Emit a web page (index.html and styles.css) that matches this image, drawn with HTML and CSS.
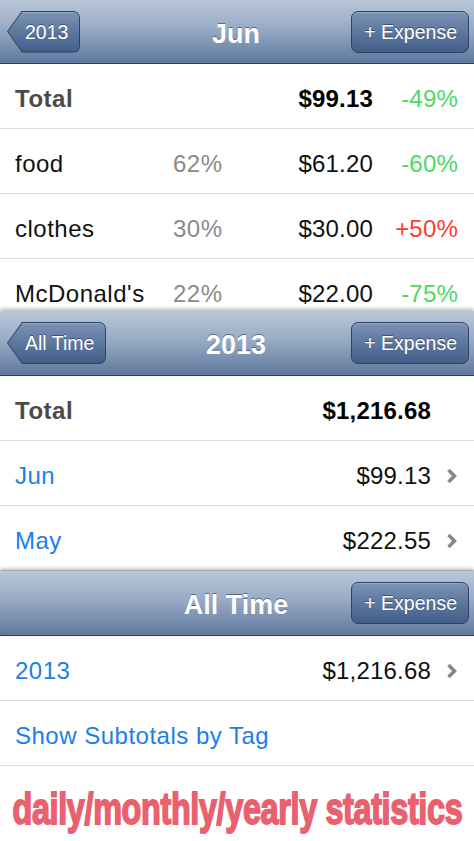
FILE: index.html
```html
<!DOCTYPE html>
<html lang="en">

<head>
    <meta charset="UTF-8">
    <meta name="viewport" content="width=device-width, initial-scale=1.0">
    <title>Expenses</title>
    <link rel="stylesheet" href="styles.css">
</head>

<body>
    <!-- month view, partly covered by the year view -->
    <section class="panel panel-month">
        <div class="nav nav-first">
            <div class="nav-left">
                <a class="back"><span class="back-in">2013</span></a>
            </div>
            <h1>Jun</h1>
            <div class="nav-right">
                <a class="btn">+ Expense</a>
            </div>
        </div>
        <div class="list list-clip">
            <div class="row row-tag total">
                <span class="label">Total</span>
                <span class="pct"></span>
                <span class="amount">$99.13</span>
                <span class="change down">-49%</span>
            </div>
            <div class="row row-tag">
                <span class="label">food</span>
                <span class="pct">62%</span>
                <span class="amount">$61.20</span>
                <span class="change down">-60%</span>
            </div>
            <div class="row row-tag">
                <span class="label">clothes</span>
                <span class="pct">30%</span>
                <span class="amount">$30.00</span>
                <span class="change up">+50%</span>
            </div>
            <div class="row row-tag">
                <span class="label">McDonald's</span>
                <span class="pct">22%</span>
                <span class="amount">$22.00</span>
                <span class="change down">-75%</span>
            </div>
        </div>
    </section>

    <!-- year view -->
    <section class="panel">
        <div class="nav">
            <div class="nav-left">
                <a class="back"><span class="back-in">All Time</span></a>
            </div>
            <h1>2013</h1>
            <div class="nav-right">
                <a class="btn">+ Expense</a>
            </div>
        </div>
        <div class="list">
            <div class="row row-sum total">
                <span class="label">Total</span>
                <span class="amount">$1,216.68</span>
                <span class="chev"></span>
            </div>
            <div class="row row-sum">
                <span class="label link">Jun</span>
                <span class="amount">$99.13</span>
                <span class="chev">
                    <svg width="11" height="16" viewBox="0 0 11 16"><polyline points="2.5,2 8.5,8 2.5,14" /></svg>
                </span>
            </div>
            <div class="row row-sum">
                <span class="label link">May</span>
                <span class="amount">$222.55</span>
                <span class="chev">
                    <svg width="11" height="16" viewBox="0 0 11 16"><polyline points="2.5,2 8.5,8 2.5,14" /></svg>
                </span>
            </div>
        </div>
    </section>

    <!-- all time view -->
    <section class="panel">
        <div class="nav">
            <div class="nav-left"></div>
            <h1>All Time</h1>
            <div class="nav-right">
                <a class="btn">+ Expense</a>
            </div>
        </div>
        <div class="list">
            <div class="row row-sum">
                <span class="label link">2013</span>
                <span class="amount">$1,216.68</span>
                <span class="chev">
                    <svg width="11" height="16" viewBox="0 0 11 16"><polyline points="2.5,2 8.5,8 2.5,14" /></svg>
                </span>
            </div>
            <div class="row">
                <span class="label link">Show Subtotals by Tag</span>
            </div>
        </div>
    </section>

    <div class="caption">
        <span class="caption-text">daily/monthly/yearly statistics</span>
    </div>
</body>

</html>
```

FILE: styles.css
```css
body {
    margin: 0;
    width: 474px;
    height: 841px;
    overflow: hidden;
    background: #fff;
    font-family: "Liberation Sans", Arial, sans-serif;
    color: #111;
}

.panel {
    display: flex;
    flex-direction: column;
}

/* navigation bar */

.nav {
    position: relative;
    z-index: 1;
    display: grid;
    grid-template-columns: 1fr auto 1fr;
    align-items: center;
    height: 64px;
    padding: 0 5px 0 7px;
    background: linear-gradient(#b9c6d9 0%, #98abc5 45%, #5f789c 100%);
    border-bottom: 1px solid #2f3e55;
    box-shadow: 0 -2px 4px rgba(0, 0, 0, 0.3);
}

.nav-first {
    height: 63px;
    box-shadow: none;
}

.nav h1 {
    margin: 0 4px 0 0;
    padding-top: 5px;
    font-size: 27px;
    font-weight: bold;
    color: #fff;
    text-shadow: 0 -1px 0 rgba(30, 45, 70, 0.55);
}

.nav-left {
    justify-self: start;
}

.nav-right {
    justify-self: end;
}

.back {
    display: flex;
    height: 42px;
    padding: 1px;
    box-sizing: border-box;
    background: #2e4262;
    border-radius: 0 7px 7px 0;
    clip-path: polygon(15px 0, 100% 0, 100% 100%, 15px 100%, 0 50%);
}

.back-in {
    display: flex;
    align-items: center;
    padding: 1px 11px 0 17px;
    font-size: 19.5px;
    color: #fff;
    text-shadow: 0 -1px 0 rgba(20, 35, 60, 0.5);
    background: linear-gradient(#7c93b4 0%, #5d779e 50%, #425e89 100%);
    border-radius: 0 6px 6px 0;
    clip-path: polygon(14.5px 0, 100% 0, 100% 100%, 14.5px 100%, 0 50%);
    box-shadow: inset 0 1px 0 rgba(255, 255, 255, 0.2);
}

.btn {
    display: flex;
    align-items: center;
    height: 42px;
    box-sizing: border-box;
    padding: 1px 11px 0 12px;
    font-size: 19.5px;
    color: #fff;
    text-shadow: 0 -1px 0 rgba(20, 35, 60, 0.5);
    background: linear-gradient(#7c93b4 0%, #5d779e 50%, #425e89 100%);
    border: 1px solid #2e4262;
    border-radius: 7px;
    box-shadow: inset 0 1px 0 rgba(255, 255, 255, 0.2);
}

/* lists */

.list-clip {
    height: 247px;
    overflow: hidden;
}

.row {
    display: flex;
    align-items: center;
    height: 65px;
    box-sizing: border-box;
    padding: 6px 17px 0 15px;
    border-bottom: 1px solid #dcdcdc;
    font-size: 24px;
    letter-spacing: 0.5px;
    flex-shrink: 0;
}

.row-tag {
    display: grid;
    grid-template-columns: 158px 60px 1fr 85px;
    padding-right: 16px;
}

.row-tag .amount,
.row-tag .change {
    text-align: right;
    letter-spacing: 0.2px;
}

.pct {
    color: #8a8a8a;
}

.down {
    color: #4cd964;
}

.up {
    color: #ff3b30;
}

.total .label {
    color: #4a4a4a;
    font-weight: bold;
}

.total .amount {
    font-weight: bold;
    color: #000;
}

.row-sum .label {
    flex-grow: 1;
}

.row-sum .amount {
    letter-spacing: 0.2px;
}

.chev {
    width: 11px;
    margin-left: 15px;
    display: flex;
}

.chev polyline {
    fill: none;
    stroke: #878787;
    stroke-width: 3.5;
}

.link {
    color: #1a7ef0;
}

/* caption under the screenshot */

.caption {
    display: flex;
    justify-content: center;
    padding-top: 17px;
}

.caption-text {
    flex-shrink: 0;
    font-size: 45px;
    font-weight: bold;
    color: #e9606f;
    -webkit-text-stroke: 1.8px #e9606f;
    letter-spacing: -0.5px;
    white-space: nowrap;
    transform: scaleX(0.72);
}
```
